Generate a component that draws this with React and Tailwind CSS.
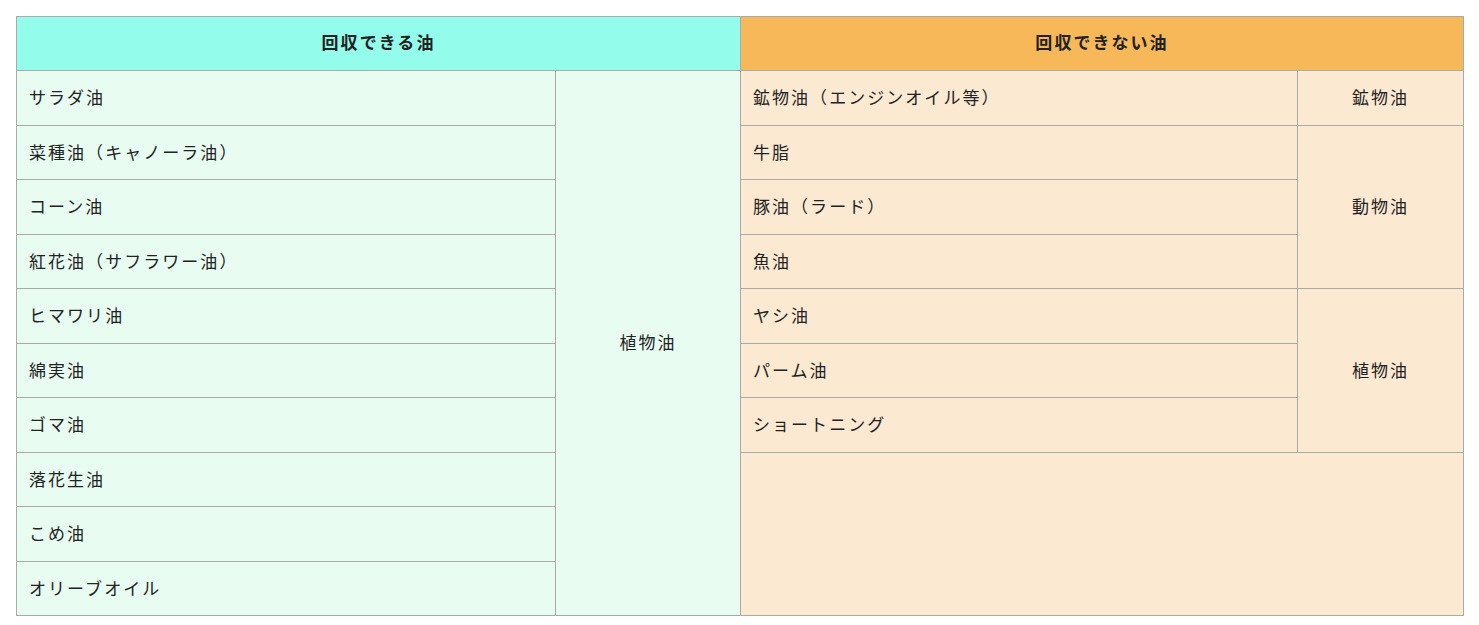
import React from 'react';

const canRecycle = [
    'サラダ油',
    '菜種油（キャノーラ油）',
    'コーン油',
    '紅花油（サフラワー油）',
    'ヒマワリ油',
    '綿実油',
    'ゴマ油',
    '落花生油',
    'こめ油',
    'オリーブオイル',
];

const cannotRecycle = [
    { name: '鉱物油（エンジンオイル等）', group: '鉱物油', span: 1 },
    { name: '牛脂', group: '動物油', span: 3 },
    { name: '豚油（ラード）' },
    { name: '魚油' },
    { name: 'ヤシ油', group: '植物油', span: 3 },
    { name: 'パーム油' },
    { name: 'ショートニング' },
];

const cell = 'border border-[#aaaaaa] px-3 pb-[2px] font-normal';
const left = 'bg-[#e8fcf1]';
const right = 'bg-[#fce9d2]';

const App = () => {
    return (
        <div className="p-4 bg-white min-h-[625px]" style={{ fontFamily: '"Noto Sans CJK JP", "Noto Sans", sans-serif' }}>
            <table className="w-[1447px] border-collapse table-fixed text-[17px] tracking-[0.12em] text-[#222222]">
                <colgroup>
                    <col className="w-[539px]" />
                    <col className="w-[185px]" />
                    <col className="w-[557px]" />
                    <col className="w-[166px]" />
                </colgroup>
                <thead>
                    <tr className="h-[54px]">
                        <th colSpan={2} className="border border-[#aaaaaa] bg-[#94fcea] pb-[3px] text-center font-bold">回収できる油</th>
                        <th colSpan={2} className="border border-[#aaaaaa] bg-[#f7b85a] pb-[3px] text-center font-bold">回収できない油</th>
                    </tr>
                </thead>
                <tbody>
                    {canRecycle.map((name, i) => {
                        const r = cannotRecycle[i];
                        return (
                            <tr key={name} className="h-[54.5px]">
                                <td className={`${cell} ${left} text-left`}>{name}</td>
                                {i === 0 && (
                                    <td rowSpan={10} className={`${cell} ${left} text-center`}>植物油</td>
                                )}
                                {r && <td className={`${cell} ${right} text-left`}>{r.name}</td>}
                                {r && r.group && (
                                    <td rowSpan={r.span} className={`${cell} ${right} text-center`}>{r.group}</td>
                                )}
                                {i === 7 && (
                                    <td rowSpan={3} colSpan={2} className={`${cell} ${right}`}></td>
                                )}
                            </tr>
                        );
                    })}
                </tbody>
            </table>
        </div>
    );
};

export default App;
